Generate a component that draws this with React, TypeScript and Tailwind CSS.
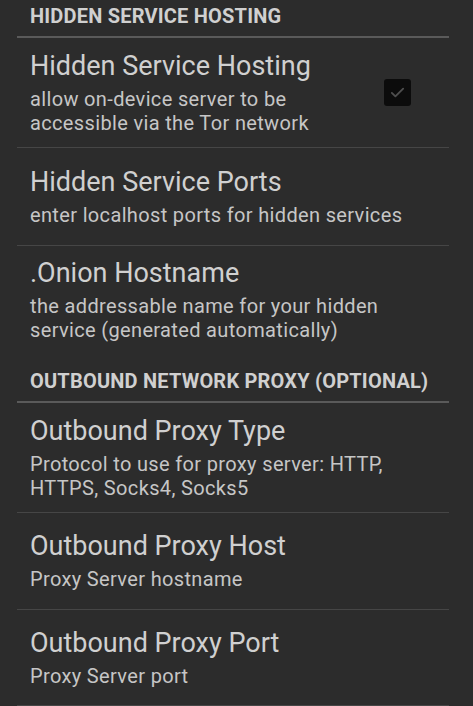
import * as React from "react";

type Item = { title: string; summary: string; checked?: boolean };

function Header({ label, h }: { label: string; h: string }) {
  return (
    <div>
      <div className={`${h} flex items-end pl-[30px] pb-[9px]`}>
        <span className="text-[20px] leading-[22px] font-bold text-[#d0d0d0] tracking-[0.2px]">
          {label}
        </span>
      </div>
      <div className="ml-[17px] mr-[24px] h-[2px] bg-[#5a5a5a]" />
    </div>
  );
}

function Pref({ item, h, last }: { item: Item; h: string; last?: boolean }) {
  const hasBox = item.checked !== undefined;
  return (
    <div>
      <div className={`${h} flex items-center pl-[30px] pr-[62px]`}>
        <div className={`flex-1 min-w-0 ${hasBox ? "pr-[40px]" : "mr-[-20px]"}`}>
          <div className="text-[27px] leading-[30px] text-[#d0d0d0] whitespace-nowrap">{item.title}</div>
          <div className="mt-[6px] text-[20px] leading-[24px] tracking-[0.35px] text-[#c6c6c6]">
            {item.summary}
          </div>
        </div>
        {hasBox ? (
          <div className="w-[27px] h-[27px] rounded-[3px] bg-[#0c0c0c] flex items-center justify-center">
            <svg width="17" height="17" viewBox="0 0 24 24" fill="none">
              <path d="M4 12.5l5 5L20 6.5" stroke="#4f4f4f" strokeWidth="2.6" strokeLinecap="round" strokeLinejoin="round" />
            </svg>
          </div>
        ) : null}
      </div>
      {last ? null : <div className="ml-[17px] mr-[24px] h-px bg-[#464646]" />}
    </div>
  );
}

export default function App() {
  return (
    <div
      className="w-[473px] h-[706px] overflow-hidden bg-[#2c2c2c]"
      style={{ fontFamily: "Roboto, 'Noto Sans', sans-serif" }}
    >
      <Header label="HIDDEN SERVICE HOSTING" h="h-[36px]" />
      <Pref
        h="h-[109px]"
        item={{
          title: "Hidden Service Hosting",
          summary: "allow on-device server to be accessible via the Tor network",
          checked: true,
        }}
      />
      <Pref
        h="h-[97px]"
        item={{ title: "Hidden Service Ports", summary: "enter localhost ports for hidden services" }}
      />
      <Pref
        h="h-[108px]"
        last
        item={{
          title: ".Onion Hostname",
          summary: "the addressable name for your hidden service (generated automatically)",
        }}
      />
      <Header label="OUTBOUND NETWORK PROXY (OPTIONAL)" h="h-[47px]" />
      <Pref
        h="h-[109px]"
        item={{
          title: "Outbound Proxy Type",
          summary: "Protocol to use for proxy server: HTTP, HTTPS, Socks4, Socks5",
        }}
      />
      <Pref h="h-[96px]" item={{ title: "Outbound Proxy Host", summary: "Proxy Server hostname" }} />
      <Pref h="h-[95px]" item={{ title: "Outbound Proxy Port", summary: "Proxy Server port" }} />
    </div>
  );
}
